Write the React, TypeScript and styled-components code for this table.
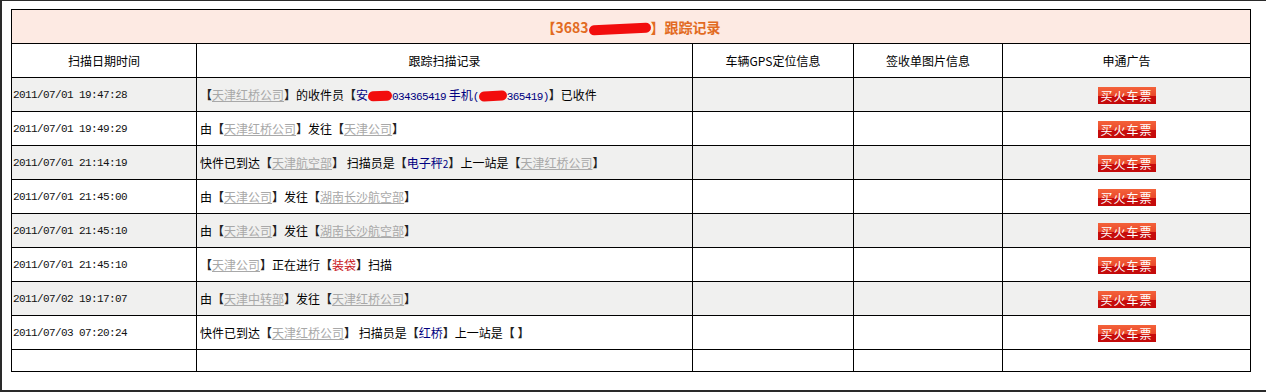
import React from 'react';
import styled, { createGlobalStyle } from 'styled-components';

const GlobalStyle = createGlobalStyle`
  html, body {
    margin: 0;
    padding: 0;
    background: #fff;
    overflow: hidden;
  }
  body {
    font-family: "Noto Sans CJK SC", "DejaVu Sans", sans-serif;
    font-size: 12px;
    color: #000;
  }
`;

const Frame = styled.div`
  width: 1300px;
  height: 392px;
  border-top: 1px solid #2a2a2a;
  border-left: 2px solid #2a2a2a;
  border-bottom: 2px solid #2a2a2a;
  padding: 8px 0 0 9px;
  box-sizing: border-box;
`;

const Table = styled.table`
  width: 1239px;
  table-layout: fixed;
  border-collapse: collapse;
  border: 1px solid #000;
`;

const TitleCell = styled.td`
  height: 33px;
  padding: 0;
  background: #fdeae3;
  border: 1px solid #000;
  text-align: center;
  color: #e26a22;
  font-weight: bold;
  font-size: 14px;
`;

const HeadCell = styled.td`
  height: 33px;
  padding: 0;
  border: 1px solid #000;
  text-align: center;
  font-size: 12px;
`;

const Row = styled.tr<{ $shade: boolean }>`
  background: ${(p) => (p.$shade ? '#f0f0ef' : '#fff')};
`;

const Cell = styled.td<{ $align?: string }>`
  height: 33px;
  padding: 0 0 0 ${(p) => (p.$align === 'center' ? '0' : '3px')};
  border: 1px solid #000;
  text-align: ${(p) => p.$align || 'left'};
  white-space: nowrap;
  overflow: hidden;
`;

const DateCell = styled(Cell)`
  padding-left: 1px;
  font-family: "Liberation Mono", "DejaVu Sans Mono", monospace;
  font-size: 11px;
  letter-spacing: -0.6px;
  color: #111;
`;

const EmptyCell = styled.td`
  height: 21px;
  padding: 0;
  border: 1px solid #000;
`;

const Bracket = styled.span`
  color: #222;
  font-weight: bold;
`;

const Place = styled.span`
  color: #a8a8a8;
  text-decoration: underline;
`;

const Person = styled.span`
  color: #000080;
`;

const Mono = styled.span`
  font-family: "Liberation Mono", "DejaVu Sans Mono", monospace;
  font-size: 11px;
  letter-spacing: -0.6px;
`;

const Action = styled.span`
  color: #c8141c;
`;

const Scribble = styled.span<{ $w: number }>`
  display: inline-block;
  width: ${(p) => p.$w}px;
  height: 10px;
  background: #f20d0d;
  border-radius: 6px;
  vertical-align: -1px;
  transform: rotate(-3deg);
`;

const TicketButton = styled.span`
  display: inline-block;
  width: 58px;
  height: 17px;
  line-height: 17px;
  color: #fff;
  font-size: 12px;
  text-align: center;
  letter-spacing: 1px;
  background: linear-gradient(#f4623a 0%, #ea4a2c 50%, #c70d0d 52%, #c40a0a 100%);
  vertical-align: middle;
`;

const P = ({ children }: { children: React.ReactNode }) => (
  <>
    <Bracket>【</Bracket>
    <Place>{children}</Place>
    <Bracket>】</Bracket>
  </>
);

interface Record {
  time: string;
  content: React.ReactNode;
}

const records: Record[] = [
  {
    time: '2011/07/01 19:47:28',
    content: (
      <>
        <P>天津红桥公司</P>的收件员<Bracket>【</Bracket>
        <Person>
          安<Scribble $w={24} />
          <Mono>034365419</Mono> 手机<Mono>(</Mono>
          <Scribble $w={28} />
          <Mono>365419)</Mono>
        </Person>
        <Bracket>】</Bracket>已收件
      </>
    ),
  },
  {
    time: '2011/07/01 19:49:29',
    content: (
      <>
        由<P>天津红桥公司</P>发往<P>天津公司</P>
      </>
    ),
  },
  {
    time: '2011/07/01 21:14:19',
    content: (
      <>
        快件已到达<P>天津航空部</P> 扫描员是<Bracket>【</Bracket>
        <Person>
          电子秤<small>2</small>
        </Person>
        <Bracket>】</Bracket>上一站是<P>天津红桥公司</P>
      </>
    ),
  },
  {
    time: '2011/07/01 21:45:00',
    content: (
      <>
        由<P>天津公司</P>发往<P>湖南长沙航空部</P>
      </>
    ),
  },
  {
    time: '2011/07/01 21:45:10',
    content: (
      <>
        由<P>天津公司</P>发往<P>湖南长沙航空部</P>
      </>
    ),
  },
  {
    time: '2011/07/01 21:45:10',
    content: (
      <>
        <P>天津公司</P>正在进行<Bracket>【</Bracket>
        <Action>装袋</Action>
        <Bracket>】</Bracket>扫描
      </>
    ),
  },
  {
    time: '2011/07/02 19:17:07',
    content: (
      <>
        由<P>天津中转部</P>发往<P>天津红桥公司</P>
      </>
    ),
  },
  {
    time: '2011/07/03 07:20:24',
    content: (
      <>
        快件已到达<P>天津红桥公司</P> 扫描员是<Bracket>【</Bracket>
        <Person>红桥</Person>
        <Bracket>】</Bracket>上一站是<Bracket>【 】</Bracket>
      </>
    ),
  },
];

const App: React.FC = () => {
  return (
    <>
      <GlobalStyle />
      <Frame>
        <Table>
          <colgroup>
            <col style={{ width: 185 }} />
            <col style={{ width: 496 }} />
            <col style={{ width: 161 }} />
            <col style={{ width: 149 }} />
            <col style={{ width: 248 }} />
          </colgroup>
          <tbody>
            <tr>
              <TitleCell colSpan={5}>
                【3683<Scribble $w={62} />】跟踪记录
              </TitleCell>
            </tr>
            <tr>
              <HeadCell>扫描日期时间</HeadCell>
              <HeadCell>跟踪扫描记录</HeadCell>
              <HeadCell>车辆GPS定位信息</HeadCell>
              <HeadCell>签收单图片信息</HeadCell>
              <HeadCell>申通广告</HeadCell>
            </tr>
            {records.map((r, i) => (
              <Row key={i} $shade={i % 2 === 0}>
                <DateCell>{r.time}</DateCell>
                <Cell>{r.content}</Cell>
                <Cell />
                <Cell />
                <Cell $align="center">
                  <TicketButton>买火车票</TicketButton>
                </Cell>
              </Row>
            ))}
            <tr>
              <EmptyCell />
              <EmptyCell />
              <EmptyCell />
              <EmptyCell />
              <EmptyCell />
            </tr>
          </tbody>
        </Table>
      </Frame>
    </>
  );
};

export default App;
